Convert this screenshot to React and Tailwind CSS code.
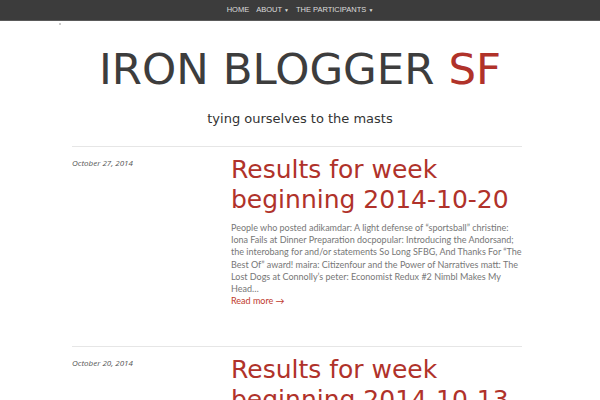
import React from 'react';

const posts = [
  {
    date: 'October 27, 2014',
    title: ['Results for week', 'beginning 2014-10-20'],
    excerpt: [
      'People who posted adikamdar: A light defense of \u201csportsball\u201d christine:',
      'Iona Fails at Dinner Preparation docpopular: Introducing the Andorsand;',
      'the interobang for and/or statements So Long SFBG, And Thanks For \u201cThe',
      'Best Of\u201d award! maira: Citizenfour and the Power of Narratives matt: The',
      'Lost Dogs at Connolly\u2019s peter: Economist Redux #2 Nimbl Makes My',
      'Head\u2026',
    ],
  },
  {
    date: 'October 20, 2014',
    title: ['Results for week', 'beginning 2014-10-13'],
    excerpt: [],
  },
];

const NavBar = () => (
  <div className="h-[21px] bg-[#3c3c3c] border-b border-[#5a5a5a] flex items-center justify-center gap-[7px] text-[7.5px] uppercase text-[#dcdcdc] font-['Liberation_Sans',sans-serif]">
    <span>Home</span>
    <span>About <span className="text-[5px]">&#9660;</span></span>
    <span>The Participants <span className="text-[5px]">&#9660;</span></span>
  </div>
);

const Post = ({ post }) => (
  <div className="border-t border-[#e6e6e6] flex pt-[6px] pb-[39px]">
    <div className="w-[159px] shrink-0 text-[8px] italic text-[#555] font-['Open_Sans',sans-serif] pt-[4px]">
      {post.date}
    </div>
    <div className="flex-1">
      <h2 className="mt-[2px] text-[25px] leading-[30px] text-[#b0322a] font-['DejaVu_Sans',sans-serif]">
        {post.title.map((l) => (
          <div key={l}>{l}</div>
        ))}
      </h2>
      {post.excerpt.length > 0 && (
        <div className="mt-[7px] text-[9px] leading-[12.2px] text-[#777] font-['Lato',sans-serif]">
          {post.excerpt.map((l) => (
            <div key={l} className="whitespace-nowrap">{l}</div>
          ))}
          <div className="text-[#c0392b]">Read more &rarr;</div>
        </div>
      )}
    </div>
  </div>
);

export default function App() {
  return (
    <div className="w-[600px] h-[400px] overflow-hidden bg-white">
      <NavBar />
      <div className="relative">
        <span className="absolute left-[59px] top-[2px] w-[2px] h-[2px] bg-[#ccc]" />
      </div>
      <div className="text-center pt-[23px] font-['DejaVu_Sans',sans-serif]">
        <h1 className="text-[43.5px] leading-[50px] text-[#3d3d3d]">
          IRON BLOGGER <span className="text-[#b0322a]">SF</span>
        </h1>
        <p className="mt-[17px] text-[13px] leading-[16px] text-[#333]">tying ourselves to the masts</p>
      </div>
      <div className="w-[450px] ml-[72px] mt-[19px]">
        {posts.map((p) => (
          <Post key={p.date} post={p} />
        ))}
      </div>
    </div>
  );
}
